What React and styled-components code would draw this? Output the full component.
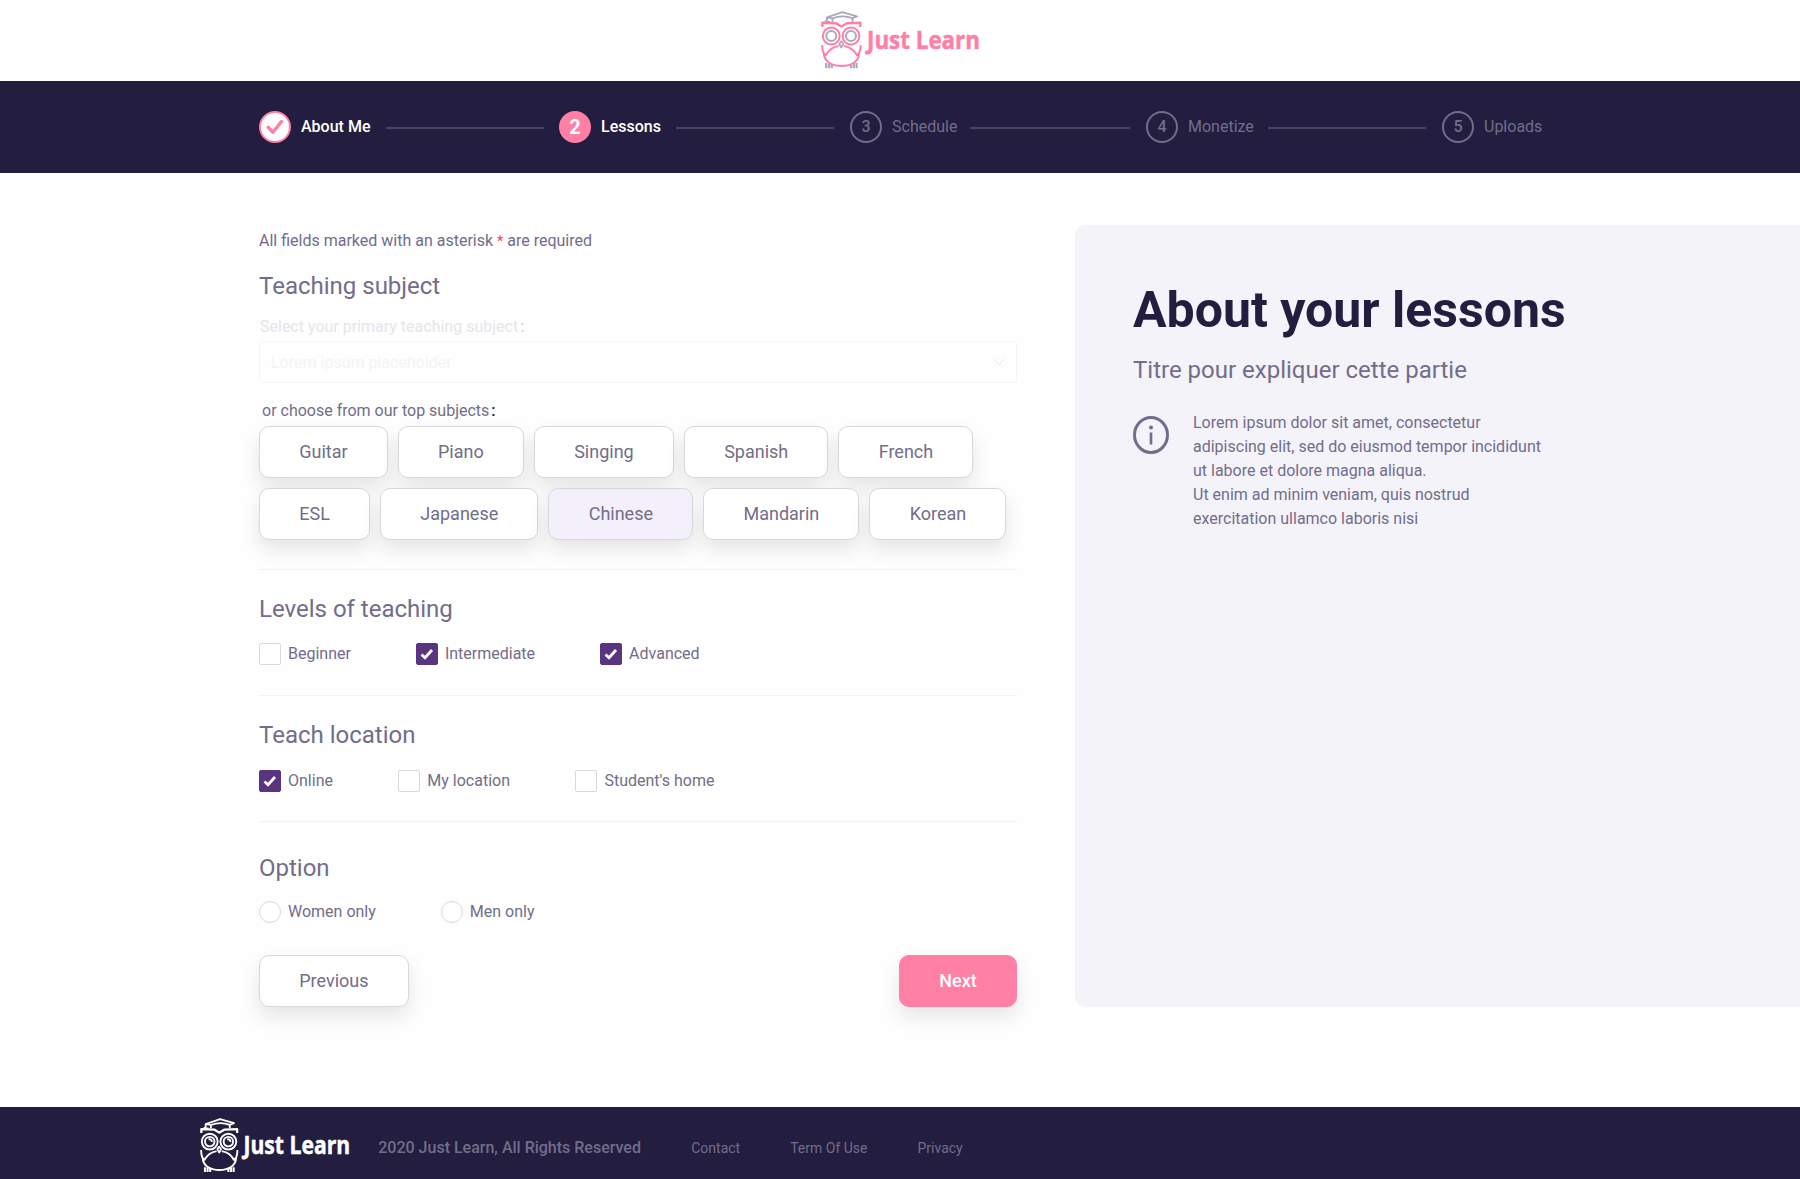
import React from 'react';
import styled, { createGlobalStyle, css } from 'styled-components';

const ink = '#231d3f';
const muted = '#726d8a';
const pink = '#ff7fa5';

const Global = createGlobalStyle`
  *, *::before, *::after { box-sizing: border-box; }
  html, body { margin: 0; padding: 0; }
  body { background: #fefefe; color: ${muted}; font-family: Roboto, "Liberation Sans", sans-serif; font-size: 16px; overflow-x: hidden; }
  h1, h2, p { margin: 0; font-weight: 400; }
  button { font-family: inherit; }
`;

const Page = styled.div`
  display: flex;
  flex-direction: column;
  width: 1800px;
  height: 1179px;
`;

const Header = styled.header`
  display: flex;
  justify-content: center;
  height: 81px;
  padding-top: 11px;
  background: #fff;
`;

const LogoSvg = styled.svg`
  display: block;
  flex: none;
  overflow: visible;
  margin-top: ${({ $top = 0 }) => $top}px;
`;

const Stepper = styled.nav`
  display: grid;
  grid-template-columns: 300px 291px 296px 296px auto;
  align-items: center;
  height: 92px;
  padding: 0 0 0 259px;
  background: ${ink};
`;

const Step = styled.div`
  display: flex;
  align-items: center;
  height: 32px;
`;

const StepMark = styled.span`
  display: flex;
  align-items: center;
  justify-content: center;
  width: 32px;
  height: 32px;
  margin-right: 10px;
  padding-bottom: 1px;
  border: 2px solid ${muted};
  border-radius: 50%;
  font-size: 16px;
  font-weight: 500;
  color: ${muted};
  ${({ $state }) => $state === 'done' && css`
    padding-bottom: 0;
    background: #fff;
    border-color: ${pink};
  `}
  ${({ $state }) => $state === 'current' && css`
    padding-bottom: 0;
    background: ${pink};
    border-color: ${pink};
    color: #fff;
    font-size: 20px;
    font-weight: 700;
  `}
`;

const StepLabel = styled.span`
  padding-bottom: 2px;
  color: ${({ $lit }) => ($lit ? '#fff' : muted)};
  font-weight: ${({ $lit }) => ($lit ? 500 : 400)};
`;

const StepLine = styled.span`
  width: ${({ $width = 158 }) => $width}px;
  height: 2px;
  margin: 2px ${({ $end = 16 }) => $end}px 0 auto;
  background: #4a4463;
`;

const Main = styled.main`
  display: flex;
  align-items: flex-start;
  justify-content: space-between;
  height: 934px;
  padding: 52px 0 0 259px;
`;

const Form = styled.form`
  display: flex;
  flex-direction: column;
  width: 758px;
`;

const Note = styled.p`
  height: 31px;
  padding-top: 1px;
  line-height: 30px;
`;

const Star = styled.span`
  color: #ff4a50;
  font-size: 14px;
  font-weight: 500;
`;

const Title = styled.h2`
  height: 30px;
  margin-top: ${({ $top }) => $top}px;
  font-size: 24px;
  line-height: 30px;
`;

const Label = styled.label`
  height: 20px;
  margin-top: ${({ $top }) => $top}px;
  padding-left: ${({ $indent }) => $indent}px;
  line-height: 20px;
  color: ${({ $faded }) => ($faded ? '#e6e5ea' : muted)};
`;

const Colon = styled.span`
  margin-left: 2px;
  color: ${({ $faded }) => ($faded ? '#d5d4d8' : '#222')};
  font-weight: 500;
`;

const Select = styled.div`
  display: flex;
  align-items: center;
  justify-content: space-between;
  height: 42px;
  margin-top: 4px;
  padding: 0 11px;
  border: 1px solid #f5f5f7;
  border-radius: 4px;
  color: #f4f4f5;
`;

const Chips = styled.div`
  display: flex;
  flex-wrap: wrap;
  gap: 10px;
  margin-top: 5px;
`;

const Button = styled.button`
  height: 52px;
  padding: 0 39.22px;
  border: 1px solid #d8d8db;
  border-radius: 10px;
  background: ${({ $selected }) => ($selected ? '#f3f0fb' : '#fff')};
  box-shadow: 0 10px 20px rgba(0, 0, 0, 0.1);
  color: ${muted};
  font-size: 18px;
  line-height: 24px;
  ${({ $primary }) => $primary && css`
    border-color: ${pink};
    background: ${pink};
    color: #fff;
    font-weight: 500;
  `}
`;

const Divider = styled.hr`
  width: 100%;
  height: 1px;
  margin: ${({ $top }) => $top}px 0 0;
  border: 0;
  background: #f2f2f5;
`;

const Choices = styled.div`
  display: flex;
  gap: ${({ $gap = 65 }) => $gap}px;
  margin-top: ${({ $top }) => $top}px;
`;

const Choice = styled.span`
  display: flex;
  align-items: center;
  gap: 7px;
  height: 22px;
  line-height: 22px;
`;

const Box = styled.span`
  display: flex;
  align-items: center;
  justify-content: center;
  width: 22px;
  height: 22px;
  border: 1px solid ${({ $on }) => ($on ? '#5a357f' : '#d9d9dc')};
  border-radius: ${({ $round }) => ($round ? '50%' : '2px')};
  background: ${({ $on }) => ($on ? '#5a357f' : '#fff')};
`;

const Actions = styled.div`
  display: flex;
  justify-content: space-between;
  margin-top: 32px;
`;

const Aside = styled.aside`
  width: 725px;
  height: 782px;
  padding: 55px 58px 0;
  border-radius: 10px 0 0 10px;
  background: #f4f3fa;
`;

const AsideTitle = styled.h1`
  color: ${ink};
  font-size: 50px;
  font-weight: 700;
  line-height: 60px;
  white-space: nowrap;
`;

const Info = styled.div`
  display: flex;
  gap: 24px;
  margin-top: 26px;
  line-height: 24px;
`;

const InfoIcon = styled.svg`
  flex: none;
  width: 36px;
  height: 38px;
  margin-top: 5px;
`;

const Footer = styled.footer`
  display: flex;
  align-items: center;
  height: 72px;
  padding-left: 200px;
  background: ${ink};
`;

const Copyright = styled.span`
  width: 313px;
  margin-left: 28px;
  padding-top: 9px;
  font-weight: 500;
`;

const FooterLink = styled.a`
  margin-right: 50px;
  padding-top: 10px;
  font-size: 14px;
`;

function Logo({ main, accent, scale = 1, glint, top }) {
  return (
    <LogoSvg $top={top} width={159 * scale} height={58 * scale} viewBox="0 0 159 58" fill="none">
      <g stroke={accent} strokeWidth="1.9" strokeLinejoin="round">
        <path d="M6 6.400 21.300 1.200 36 5.400 31.500 7.200Q21.500 3.500 11.500 7.400Z" />
        <path d="M11.500 7.200V10.800M31.500 7.200V10.800M6 6.400V9.200L4.300 11H9" />
        <circle cx="10.300" cy="25" r="5" strokeWidth="2" />
        <circle cx="30" cy="25" r="5" strokeWidth="2" />
        <path d="M20.300 30.300 18.300 33 20.300 36.500 22.300 33Z" strokeWidth="1.800" />
        <path d="M5.200 52V57.200M8 52.500V57.200M10.800 53V57.200M30 53V57.200M32.800 52.500V57.200M35.600 52V57.200" strokeWidth="2.200" />
      </g>
      {glint && <path d="M9 22.500q3.500-.5 3.500 3M28.700 22.500q3.500-.5 3.500 3" stroke={accent} strokeWidth="2" />}
      <g stroke={main} strokeWidth="2" strokeLinejoin="round">
        <path d="M1.400 16V11.800L15 12.200 20.300 15.500 26 12.200 39.300 11.800V16" strokeWidth="2.400" />
        <circle cx="10.300" cy="25" r="8.400" />
        <circle cx="30" cy="25" r="8.400" />
        <path d="M1.200 34Q1.200 42 4.500 44.500Q9 36.500 17.500 35M39.600 34Q39.600 42 36 44.500Q32 36.500 23 35" />
        <path d="M2.800 42C3 50 10 55 20.500 55S38 50 38.200 42" />
      </g>
      <text
        x="46"
        y="38.200"
        fill={main}
        stroke={main}
        strokeWidth="0.5"
        fontFamily='"Open Sans", "Noto Sans", sans-serif'
        fontSize="25.500"
        fontWeight="700"
        textLength="113"
        lengthAdjust="spacingAndGlyphs"
      >
        Just Learn
      </text>
    </LogoSvg>
  );
}

const steps = [
  { label: 'About Me', state: 'done', end: 15 },
  { label: 'Lessons', state: 'current' },
  { label: 'Schedule', line: 160 },
  { label: 'Monetize' },
  { label: 'Uploads' },
];

const subjects = ['Guitar', 'Piano', 'Singing', 'Spanish', 'French', 'ESL', 'Japanese', 'Chinese', 'Mandarin', 'Korean'];

function Check({ label, on, round }) {
  return (
    <Choice>
      <Box $on={on} $round={round}>
        {on && (
          <svg width="14" height="12" viewBox="0 0 14 12" fill="none">
            <path d="M1.500 6.500 5 9.700 12 2" stroke="#fff" strokeWidth="2.800" />
          </svg>
        )}
      </Box>
      {label}
    </Choice>
  );
}

export default function App() {
  return (
    <Page>
      <Global />
      <Header>
        <Logo main={pink} accent="#aaa8bd" />
      </Header>
      <Stepper>
        {steps.map(({ label, state, line, end }, i) => (
          <Step key={label}>
            <StepMark $state={state}>
              {state === 'done' ? (
                <svg width="18" height="16" viewBox="0 0 18 16" fill="none">
                  <path d="M2.200 8.200 7 13.200 15.500 2.500" stroke={pink} strokeWidth="3.400" strokeLinecap="round" strokeLinejoin="round" />
                </svg>
              ) : (
                i + 1
              )}
            </StepMark>
            <StepLabel $lit={Boolean(state)}>{label}</StepLabel>
            {i < steps.length - 1 && <StepLine $width={line} $end={end} />}
          </Step>
        ))}
      </Stepper>
      <Main>
        <Form>
          <Note>
            All fields marked with an asterisk <Star>*</Star> are required
          </Note>
          <Title $top={15}>Teaching subject</Title>
          <Label $top={16} $indent={1} $faded>
            Select your primary teaching subject<Colon $faded>:</Colon>
          </Label>
          <Select>
            Lorem ipsum placeholder
            <svg width="12" height="9" viewBox="0 0 12 9" fill="none">
              <path d="M1 1 6 7 11 1" stroke="#f0f0f3" strokeWidth="1.200" />
            </svg>
          </Select>
          <Label $top={18} $indent={3}>
            or choose from our top subjects<Colon>:</Colon>
          </Label>
          <Chips>
            {subjects.map((name) => (
              <Button type="button" key={name} $selected={name === 'Chinese'}>
                {name}
              </Button>
            ))}
          </Chips>
          <Divider $top={29} />
          <Title $top={24}>Levels of teaching</Title>
          <Choices $top={19}>
            <Check label="Beginner" />
            <Check label="Intermediate" on />
            <Check label="Advanced" on />
          </Choices>
          <Divider $top={30} />
          <Title $top={24}>Teach location</Title>
          <Choices $top={20} $gap={65.4}>
            <Check label="Online" on />
            <Check label="My location" />
            <Check label="Student's home" />
          </Choices>
          <Divider $top={29} />
          <Title $top={31}>Option</Title>
          <Choices $top={18}>
            <Check label="Women only" round />
            <Check label="Men only" round />
          </Choices>
          <Actions>
            <Button type="button">Previous</Button>
            <Button type="button" $primary>
              Next
            </Button>
          </Actions>
        </Form>
        <Aside>
          <AsideTitle>About your lessons</AsideTitle>
          <Title as="p" $top={15}>
            Titre pour expliquer cette partie
          </Title>
          <Info>
            <InfoIcon viewBox="0 0 36 38" fill="none">
              <ellipse cx="18" cy="19" rx="16.500" ry="17.500" stroke={muted} strokeWidth="3" />
              <circle cx="18" cy="11.500" r="2" fill={muted} />
              <path d="M18 16.500V28.500" stroke={muted} strokeWidth="2.600" />
            </InfoIcon>
            <p>
              Lorem ipsum dolor sit amet, consectetur
              <br />
              adipiscing elit, sed do eiusmod tempor incididunt
              <br />
              ut labore et dolore magna aliqua.
              <br />
              Ut enim ad minim veniam, quis nostrud
              <br />
              exercitation ullamco laboris nisi
            </p>
          </Info>
        </Aside>
      </Main>
      <Footer>
        <Logo main="#fff" accent="#fff" scale={0.945} glint top={5} />
        <Copyright>2020 Just Learn, All Rights Reserved</Copyright>
        <FooterLink>Contact</FooterLink>
        <FooterLink>Term Of Use</FooterLink>
        <FooterLink>Privacy</FooterLink>
      </Footer>
    </Page>
  );
}
